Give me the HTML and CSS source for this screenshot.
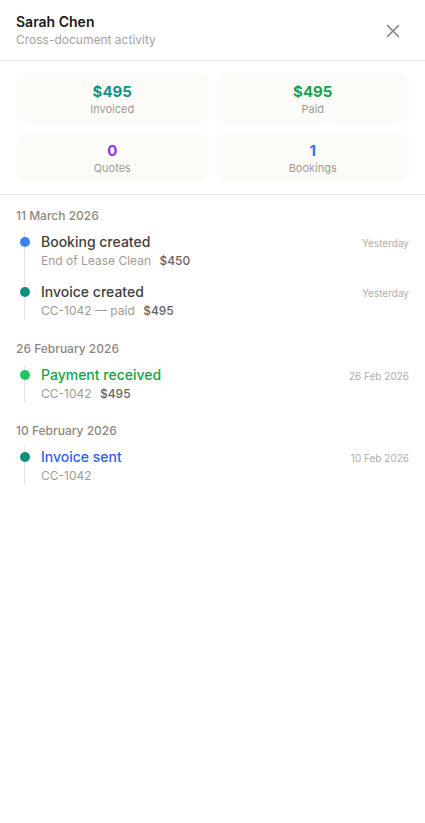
FILE: index.html
```html
<!DOCTYPE html>
<html lang="en">
<head>
<meta charset="utf-8">
<title>Sarah Chen – Activity</title>
<link rel="stylesheet" href="styles.css">
</head>
<body>
<div class="panel">
  <header class="head">
    <div class="head-text">
      <div class="name">Sarah Chen</div>
      <div class="subtitle">Cross-document activity</div>
    </div>
    <button class="close" aria-label="Close">
      <svg width="14" height="14" viewBox="0 0 14 14"><path d="M1.5 1.5L12.5 12.5M12.5 1.5L1.5 12.5" stroke="#8a847e" stroke-width="1.6" stroke-linecap="round" fill="none"/></svg>
    </button>
  </header>

  <section class="stats">
    <div class="stat"><div class="val teal">$495</div><div class="lbl">Invoiced</div></div>
    <div class="stat"><div class="val green">$495</div><div class="lbl">Paid</div></div>
    <div class="stat"><div class="val purple">0</div><div class="lbl">Quotes</div></div>
    <div class="stat"><div class="val blue">1</div><div class="lbl">Bookings</div></div>
  </section>

  <section class="timeline">
    <div class="group">
      <div class="date">11 March 2026</div>
      <ul class="items">
        <li class="item">
          <span class="dot dot-blue"></span>
          <div class="item-main">
            <div class="title">Booking created</div>
            <div class="sub">End of Lease Clean <span class="amt">$450</span></div>
          </div>
          <div class="time">Yesterday</div>
        </li>
        <li class="item">
          <span class="dot dot-teal"></span>
          <div class="item-main">
            <div class="title">Invoice created</div>
            <div class="sub">CC-1042 — paid <span class="amt">$495</span></div>
          </div>
          <div class="time">Yesterday</div>
        </li>
      </ul>
    </div>
    <div class="group">
      <div class="date">26 February 2026</div>
      <ul class="items">
        <li class="item">
          <span class="dot dot-green"></span>
          <div class="item-main">
            <div class="title title-green">Payment received</div>
            <div class="sub">CC-1042 <span class="amt">$495</span></div>
          </div>
          <div class="time">26 Feb 2026</div>
        </li>
      </ul>
    </div>
    <div class="group">
      <div class="date">10 February 2026</div>
      <ul class="items">
        <li class="item">
          <span class="dot dot-teal"></span>
          <div class="item-main">
            <div class="title title-blue">Invoice sent</div>
            <div class="sub">CC-1042</div>
          </div>
          <div class="time">10 Feb 2026</div>
        </li>
      </ul>
    </div>
  </section>
</div>
</body>
</html>
```

FILE: styles.css
```css
* { box-sizing: border-box; }
html, body { margin: 0; padding: 0; background: #ffffff; }
body {
  font-family: Inter, "Noto Sans", "Liberation Sans", sans-serif;
  color: #44403c;
  width: 425px;
  min-height: 823px;
}
.panel { display: flex; flex-direction: column; }

.head {
  display: flex;
  justify-content: space-between;
  align-items: center;
  padding: 12px 16px 12px 16px;
  border-bottom: 1px solid #e7e5e4;
}
.name { font-size: 14px; line-height: 20px; font-weight: 600; color: #1c1917; }
.subtitle { font-size: 12px; line-height: 16px; color: #a8a29e; }
.close {
  border: 0; background: none; padding: 0; margin-right: 8px; margin-top: 2px;
  width: 16px; height: 16px;
  display: flex; align-items: center; justify-content: center;
  cursor: pointer;
}

.stats {
  display: grid;
  grid-template-columns: 1fr 1fr;
  gap: 9px 8px;
  padding: 12px 16px;
  border-bottom: 1px solid #e7e5e4;
}
.stat {
  background: #fcfbf8;
  border-radius: 10px;
  padding: 9px 8px 7px;
  text-align: center;
  height: 50px;
}
.val { font-size: 15px; line-height: 20px; font-weight: 700; }
.lbl { font-size: 11px; line-height: 14px; color: #a39c96; }
.teal { color: #0d9488; }
.green { color: #16a34a; }
.purple { color: #9333ea; }
.blue { color: #3b6cf0; }

.timeline { padding: 13px 16px; display: flex; flex-direction: column; gap: 20.5px; }
.date { font-size: 12px; line-height: 16px; font-weight: 500; color: #8f8780; margin-bottom: 8px; }
.items {
  list-style: none; margin: 0 0 0 8px; padding: 0 0 0 16px;
  border-left: 1px solid #e7e5e4;
  display: flex; flex-direction: column; gap: 12px;
}
.item { position: relative; display: flex; justify-content: space-between; align-items: flex-start; }
.dot {
  position: absolute; left: -21.5px; top: 5px;
  width: 10px; height: 10px; border-radius: 50%;
}
.dot-blue { background: #3b82f6; }
.dot-teal { background: #0f8f80; }
.dot-green { background: #22c55e; }
.title { font-size: 14px; line-height: 20px; font-weight: 500; color: #44403c; }
.title-green { color: #16a34a; }
.title-blue { color: #2f5fe8; }
.sub { font-size: 12px; line-height: 18px; color: #a39c96; }
.amt { font-weight: 500; color: #6b645e; margin-left: 5px; }
.time { font-size: 10px; line-height: 20px; color: #b3ada7; padding-top: 1px; }
```
